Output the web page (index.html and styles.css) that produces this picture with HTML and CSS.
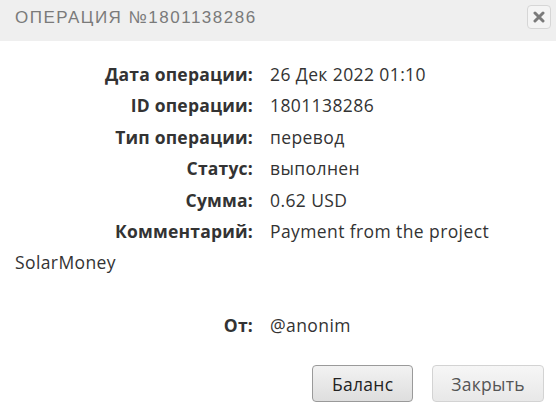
FILE: index.html
```html
<!DOCTYPE html>
<html lang="ru">
<head>
  <meta charset="UTF-8" />
  <title>Операция №1801138286</title>
  <link rel="stylesheet" href="styles.css">
</head>
<body>
  <div class="dialog">
    <div class="dialog-title">
      <span class="title-text">Операция №1801138286</span>
      <button class="close-btn" title="Закрыть">
        <svg width="12" height="12" viewBox="0 0 12 12">
          <path d="M2 2 L10 10 M10 2 L2 10" stroke="#7a7a7a" stroke-width="3" stroke-linecap="round" />
        </svg>
      </button>
    </div>

    <div class="dialog-content">
      <div class="row"><span class="label">Дата операции:</span>26 Дек 2022 01:10</div>
      <div class="row"><span class="label">ID операции:</span>1801138286</div>
      <div class="row"><span class="label">Тип операции:</span>перевод</div>
      <div class="row"><span class="label">Статус:</span>выполнен</div>
      <div class="row"><span class="label">Сумма:</span>0.62 USD</div>
      <div class="row"><span class="label">Комментарий:</span>Payment from the project SolarMoney</div>
      <div class="row row-gap"><span class="label">От:</span>@anonim</div>
    </div>

    <div class="dialog-buttons">
      <button class="btn btn-main">Баланс</button>
      <button class="btn">Закрыть</button>
    </div>
  </div>
</body>
</html>
```

FILE: styles.css
```css
body {
  margin: 0;
  background: #fff;
  font-family: "Open Sans", "Noto Sans", sans-serif;
}

.dialog {
  width: 556px;
  height: 415px;
}

.dialog-title {
  height: 41px;
  background: #efefef;
  display: flex;
  align-items: flex-start;
  justify-content: space-between;
  padding: 0 5px 0 15px;
  box-sizing: border-box;
}

.title-text {
  margin-top: 8px;
  font-family: "Liberation Sans", sans-serif;
  font-size: 17px;
  letter-spacing: 1.5px;
  text-transform: uppercase;
  color: #7a7a7a;
}

.close-btn {
  margin-top: 5px;
  width: 24px;
  height: 24px;
  padding: 0;
  border: 1px solid #d6d6d6;
  border-radius: 4px;
  background: #f4f4f4;
  display: flex;
  align-items: center;
  justify-content: center;
}

.dialog-content {
  padding: 18px 15px 0 15px;
  font-size: 17.5px;
  letter-spacing: 0.4px;
  line-height: 31.4px;
  color: #333;
}

.label {
  display: inline-block;
  width: 238px;
  margin-right: 17px;
  text-align: right;
  font-weight: bold;
  letter-spacing: 0.2px;
}

.row-gap {
  margin-top: 31px;
}

.dialog-buttons {
  display: flex;
  justify-content: flex-end;
  gap: 19px;
  padding: 24px 12px 0 0;
}

.btn {
  height: 37px;
  min-width: 101px;
  padding: 0 18px;
  font-family: "Open Sans", "Noto Sans", sans-serif;
  font-size: 17.5px;
  letter-spacing: 0.3px;
  color: #555;
  border: 1px solid #d3d3d3;
  border-radius: 4px;
  background: linear-gradient(#f6f6f6, #e8e8e8);
}

.btn-main {
  color: #222;
  border-color: #9a9a9a;
  background: linear-gradient(#f2f2f2, #dedede);
}
```
